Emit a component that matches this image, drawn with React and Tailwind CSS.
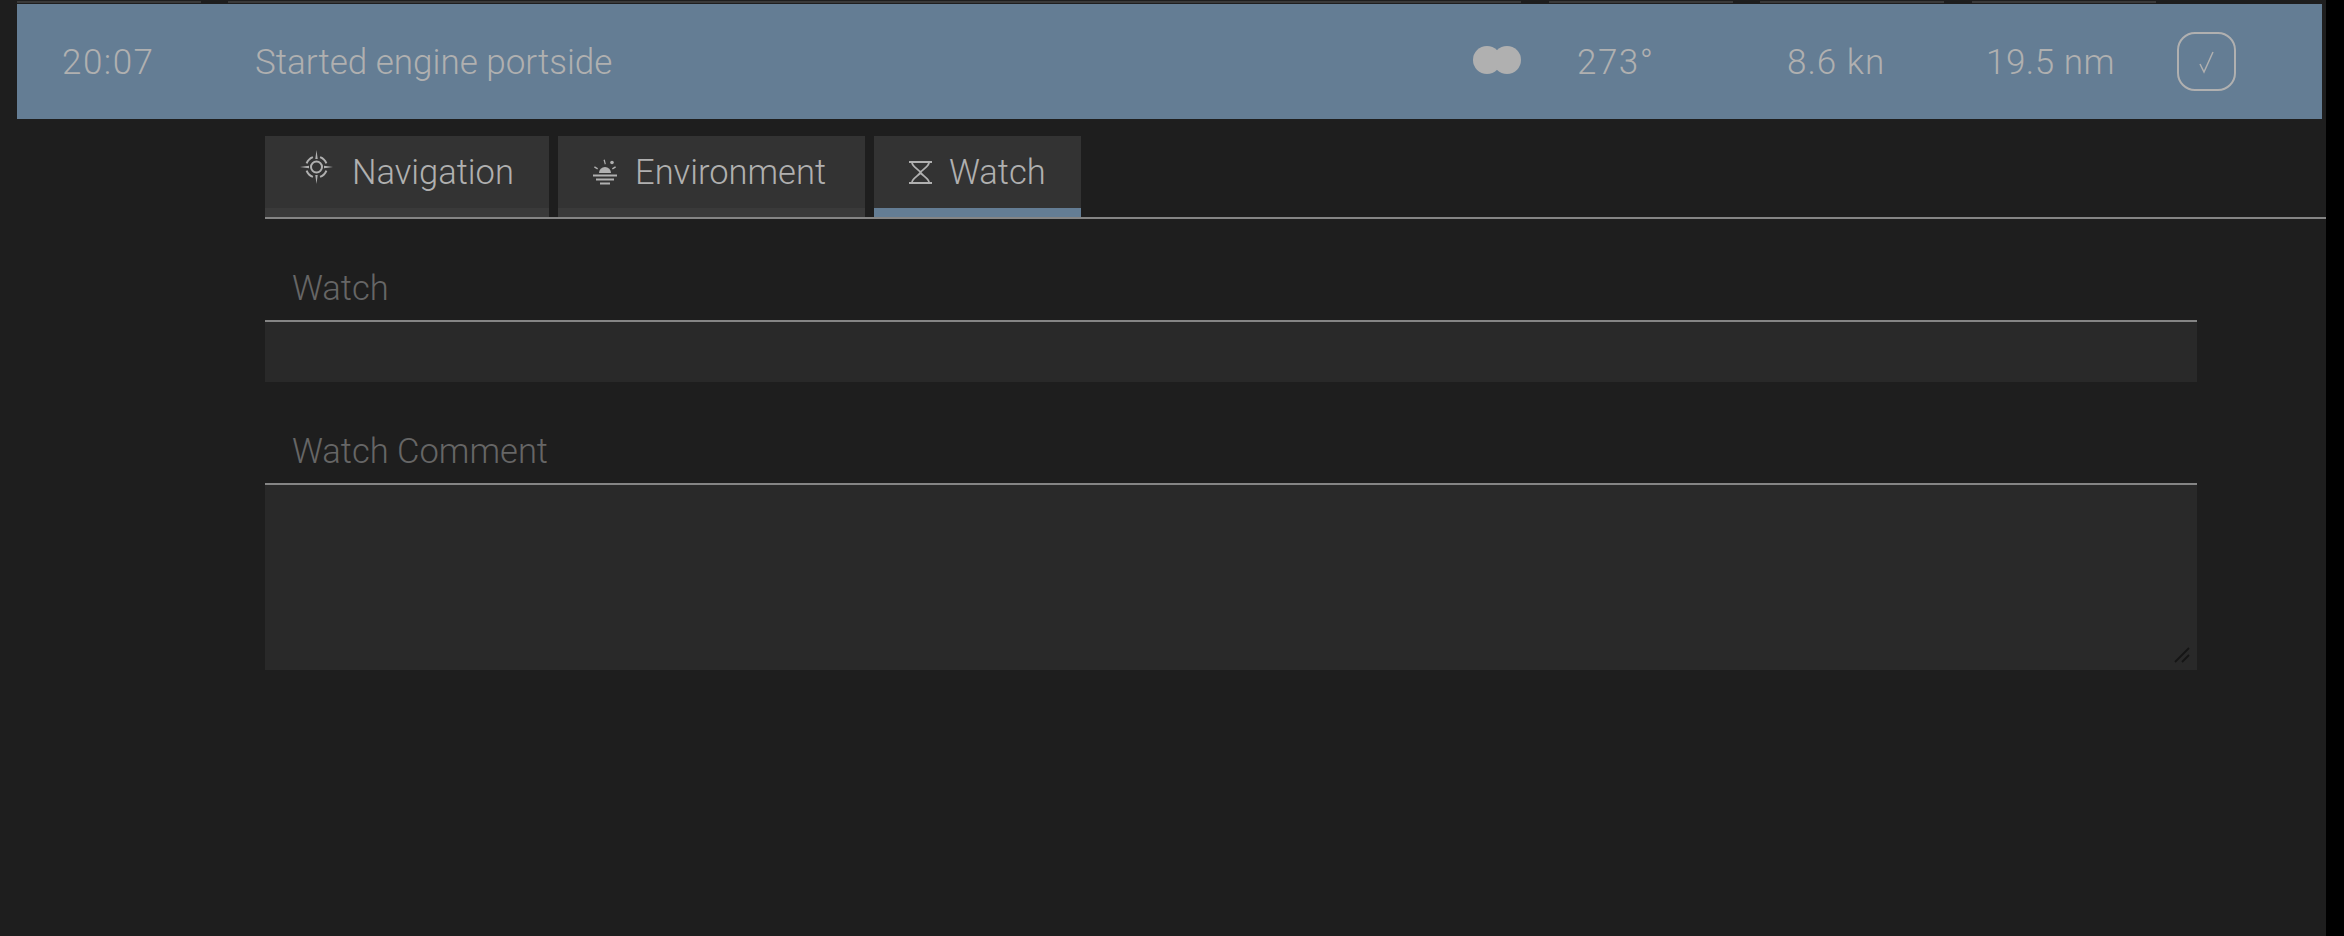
function NavIcon() {
  return (
    <svg width="33" height="34" viewBox="0 0 33 34" fill="none" stroke="currentColor" className="mb-[10px] shrink-0">
      <circle cx="16.500" cy="17" r="5.500" strokeWidth="2" />
      <path d="M20.090 7.130A10.500 10.500 0 0 1 26.370 13.410M26.370 20.590A10.500 10.500 0 0 1 20.090 26.870M12.910 26.870A10.500 10.500 0 0 1 6.630 20.590M6.630 13.410A10.500 10.500 0 0 1 12.910 7.130" strokeWidth="2" />
      <path d="M16.500 0l1.200 9h-2.400zM16.500 34l-1.200-9h2.400zM0 17l9-1.200v2.400zM33 17l-9 1.200v-2.400z" fill="currentColor" stroke="none" />
    </svg>
  );
}

function SunIcon() {
  return (
    <svg width="24" height="26" viewBox="0 0 24 26" fill="currentColor" className="shrink-0">
      <path d="M6 14a6 6 0 0 1 12 0z" />
      <path d="M0 15.500h24v2H0zM3 19.500h18v2H3zM7 23.500h10v2H7z" />
      <path d="M10.500 1l1.300-.5 1 4.500-1 .4zM1 8.500l.8-1.200 3.200 2-.7 1.100zM23 8.500l-.8-1.200-3.200 2 .7 1.100z" />
      <circle cx="19" cy="3.500" r="1.800" />
    </svg>
  );
}

function HourglassIcon() {
  return (
    <svg width="23" height="23" viewBox="0 0 23 23" fill="none" stroke="currentColor" strokeWidth="1.800" className="shrink-0">
      <path d="M0 1h23M0 22h23M3 1.500c0 4 7 7 8.500 10C13 8.500 20 5.500 20 1.500M3 21.500c0-4 7-7 8.500-10C13 14.500 20 17.500 20 21.500" />
    </svg>
  );
}

function Tab({ icon, label, active, width, gap }) {
  return (
    <div className={`flex flex-col bg-[#333333] ${width}`}>
      <div className={`flex h-[72px] items-center pl-[35px] ${gap}`}>
        {icon}
        <span className="pt-[2px] text-[34.5px] font-light text-[#b0b0b0]">{label}</span>
      </div>
      <div className={active ? "h-[9px] bg-[#647d94]" : "h-[9px] bg-[#3a3a3a]"} />
    </div>
  );
}

function Field({ label, children }) {
  return (
    <div className="flex flex-col">
      <div className="flex h-[60px] items-center border-b-2 border-[#858585] pb-[4px] pl-[27px] text-[34.5px] font-light text-[#666666]">
        {label}
      </div>
      {children}
    </div>
  );
}

export default function App() {
  return (
    <div className="h-[936px] w-[2344px] overflow-hidden bg-black font-['Roboto',sans-serif]">
      <div className="flex h-full w-[2326px] flex-col bg-[#1e1e1e]">
        {/* previous row's tab strip */}
        <div className="flex h-[4px] pl-[17px] pt-[1px]">
          <div className="h-[2px] w-[184px] bg-[#3a3a3a]" />
          <div className="ml-[27px] h-[2px] w-[1293px] bg-[#3a3a3a]" />
          <div className="ml-[28px] h-[2px] w-[184px] bg-[#3a3a3a]" />
          <div className="ml-[27px] h-[2px] w-[184px] bg-[#3a3a3a]" />
          <div className="ml-[28px] h-[2px] w-[184px] bg-[#3a3a3a]" />
        </div>

        {/* selected log row */}
        <div className="ml-[17px] flex h-[115px] w-[2305px] items-center bg-[#647d94] text-[35px] font-light text-[#b0b0b0]">
          <div className="ml-[45px] w-[193px] pt-[3px] tracking-[1.5px]">20:07</div>
          <div className="w-[1218px] pt-[3px]">Started engine portside</div>
          <div className="mb-[3px] flex w-[104px]">
            <div className="h-7 w-7 rounded-full bg-[#b0b0b0]" />
            <div className="-ml-[8px] h-7 w-7 rounded-full bg-[#b0b0b0]" />
          </div>
          <div className="w-[210px] pt-[3px] tracking-[1.5px]">273°</div>
          <div className="w-[199px] pt-[3px] tracking-[1px]">8.6 kn</div>
          <div className="w-[191px] pt-[3px] tracking-[0.5px]">19.5 nm</div>
          <div className="flex h-[59px] w-[59px] items-center justify-center rounded-[18px] border-2 border-[#b0b0b0]">
            <svg width="22" height="24" viewBox="0 0 22 24" fill="none" stroke="currentColor" strokeWidth="1.500">
              <path d="M4 14l4 8L17 2" />
            </svg>
          </div>
        </div>

        {/* tabs */}
        <div className="ml-[265px] mt-[17px] flex gap-[9px] border-b-2 border-[#858585]">
          <Tab icon={<div className="text-[#b0b0b0]"><NavIcon /></div>} label="Navigation" width="w-[284px]" gap="gap-[19px]" />
          <Tab icon={<div className="text-[#b0b0b0]"><SunIcon /></div>} label="Environment" width="w-[307px]" gap="gap-[18px]" />
          <Tab icon={<div className="text-[#b0b0b0]"><HourglassIcon /></div>} label="Watch" active width="w-[207px]" gap="gap-[17px]" />
        </div>

        {/* form */}
        <div className="ml-[265px] mt-[43px] flex w-[1932px] flex-col gap-[43px]">
          <Field label="Watch">
            <div className="h-[60px] bg-[#292929]" />
          </Field>
          <Field label="Watch Comment">
            <div className="relative h-[185px] bg-[#292929]">
              <svg width="16" height="16" viewBox="0 0 16 16" className="absolute bottom-[7px] right-[7px]" stroke="#151515" strokeWidth="1.800">
                <path d="M1 15L15 1M8 15l7-7" />
              </svg>
            </div>
          </Field>
        </div>
      </div>
    </div>
  );
}
